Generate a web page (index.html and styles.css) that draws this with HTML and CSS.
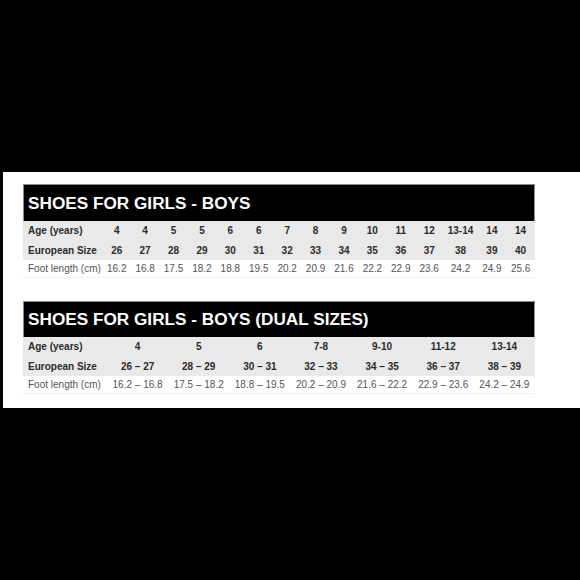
FILE: index.html
```html
<!DOCTYPE html>
<html>
<head>
<meta charset="utf-8">
<link rel="stylesheet" href="styles.css">
</head>
<body>
<div class="panel">
  <div class="chart">
    <div class="title">SHOES FOR GIRLS - BOYS</div>
    <table class="grid single">
      <colgroup>
        <col class="c-label">
        <col class="c-n"><col class="c-n"><col class="c-n"><col class="c-n"><col class="c-n"><col class="c-n">
        <col class="c-n"><col class="c-n"><col class="c-n"><col class="c-n"><col class="c-n"><col class="c-n">
        <col class="c-w"><col class="c-e"><col class="c-e">
      </colgroup>
      <tr class="row-age"><th>Age (years)</th><td>4</td><td>4</td><td>5</td><td>5</td><td>6</td><td>6</td><td>7</td><td>8</td><td>9</td><td>10</td><td>11</td><td>12</td><td>13-14</td><td>14</td><td>14</td></tr>
      <tr class="row-eu"><th>European Size</th><td>26</td><td>27</td><td>28</td><td>29</td><td>30</td><td>31</td><td>32</td><td>33</td><td>34</td><td>35</td><td>36</td><td>37</td><td>38</td><td>39</td><td>40</td></tr>
      <tr class="row-foot"><th>Foot length (cm)</th><td>16.2</td><td>16.8</td><td>17.5</td><td>18.2</td><td>18.8</td><td>19.5</td><td>20.2</td><td>20.9</td><td>21.6</td><td>22.2</td><td>22.9</td><td>23.6</td><td>24.2</td><td>24.9</td><td>25.6</td></tr>
    </table>
  </div>
  <div class="chart second">
    <div class="title">SHOES FOR GIRLS - BOYS (DUAL SIZES)</div>
    <table class="grid dual">
      <colgroup>
        <col class="d-label">
        <col class="d-n"><col class="d-n"><col class="d-n"><col class="d-n"><col class="d-n"><col class="d-n"><col class="d-n">
      </colgroup>
      <tr class="row-age"><th>Age (years)</th><td>4</td><td>5</td><td>6</td><td>7-8</td><td>9-10</td><td>11-12</td><td>13-14</td></tr>
      <tr class="row-eu"><th>European Size</th><td>26 – 27</td><td>28 – 29</td><td>30 – 31</td><td>32 – 33</td><td>34 – 35</td><td>36 – 37</td><td>38 – 39</td></tr>
      <tr class="row-foot"><th>Foot length (cm)</th><td>16.2 – 16.8</td><td>17.5 – 18.2</td><td>18.8 – 19.5</td><td>20.2 – 20.9</td><td>21.6 – 22.2</td><td>22.9 – 23.6</td><td>24.2 – 24.9</td></tr>
    </table>
  </div>
</div>
</body>
</html>
```

FILE: styles.css
```css
html, body {
  margin: 0;
  padding: 0;
  background: #000;
  font-family: "Liberation Sans", Arial, sans-serif;
}

.panel {
  margin: 172px 0 0 3px;
  height: 236px;
  box-sizing: border-box;
  background: #fff;
  padding: 12px 0 0 20px;
}

.chart {
  width: 512px;
}

.chart.second {
  margin-top: 23px;
}

.title {
  height: 37px;
  box-sizing: border-box;
  background: #000;
  border: 1px solid #8a8a8a;
  border-bottom: none;
  color: #fff;
  font-weight: bold;
  font-size: 17.2px;
  line-height: 37px;
  padding-left: 4px;
  white-space: nowrap;
}

.second .title {
  height: 36px;
  line-height: 35px;
}

.grid {
  width: 512px;
  table-layout: fixed;
  border-collapse: collapse;
  font-size: 10px;
}

.grid th,
.grid td {
  padding: 0;
  white-space: nowrap;
}

.grid th {
  text-align: left;
  padding-left: 5px;
}

.grid td {
  text-align: center;
}

.row-age,
.row-eu {
  background: #e9e9e9;
  color: #2b2b2b;
  font-weight: bold;
}

.row-age th,
.row-age td {
  height: 19px;
}

.row-eu th,
.row-eu td {
  height: 20px;
}

.row-foot {
  background: #fff;
  color: #555;
}

.row-foot th,
.row-foot td {
  font-weight: normal;
  height: 17px;
  border-bottom: 1px solid #efefef;
}

.c-label { width: 79.5px; }
.c-n { width: 28.42px; }
.c-w { width: 34.2px; }
.c-e { width: 28.65px; }

.d-label { width: 84px; }
.d-n { width: 61.14px; }
```
